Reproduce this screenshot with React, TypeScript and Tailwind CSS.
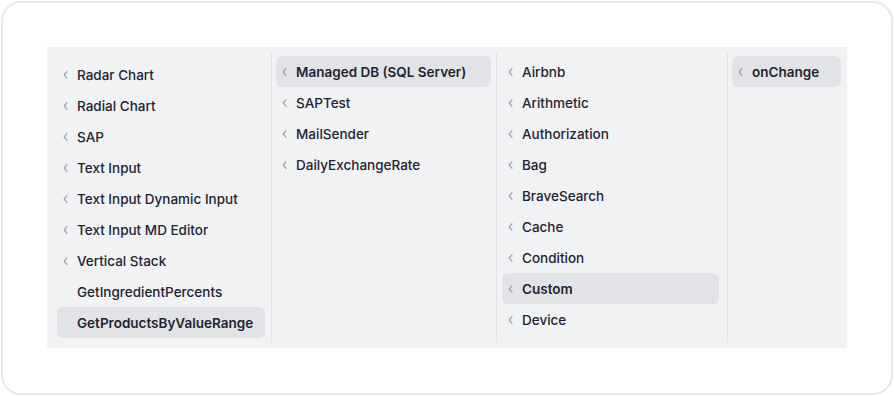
import React from "react";

type Item = { label: string; chevron?: boolean; active?: boolean };

const Chevron = () => (
  <svg width="10" height="10" viewBox="0 0 10 10" className="shrink-0" fill="none">
    <path d="M4 1.6 L1.2 5 L4 8.4" stroke="#9ca3af" strokeWidth="1.2" strokeLinecap="round" strokeLinejoin="round" />
  </svg>
);

const Row = ({ item }: { item: Item }) => (
  <div
    className={
      "flex h-[31px] items-center rounded-md pl-[6px] " +
      (item.active ? "bg-[#e2e3e7] font-semibold" : "font-medium")
    }
  >
    {item.chevron === false ? <div className="w-[10px] shrink-0" /> : <Chevron />}
    <span className="ml-[4px] whitespace-nowrap pt-[2px]">{item.label}</span>
  </div>
);

const col1: Item[] = [
  { label: "Radar Chart" },
  { label: "Radial Chart" },
  { label: "SAP" },
  { label: "Text Input" },
  { label: "Text Input Dynamic Input" },
  { label: "Text Input MD Editor" },
  { label: "Vertical Stack" },
  { label: "GetIngredientPercents", chevron: false },
  { label: "GetProductsByValueRange", chevron: false, active: true },
];

const col2: Item[] = [
  { label: "Managed DB (SQL Server)", active: true },
  { label: "SAPTest" },
  { label: "MailSender" },
  { label: "DailyExchangeRate" },
];

const col3: Item[] = [
  { label: "Airbnb" },
  { label: "Arithmetic" },
  { label: "Authorization" },
  { label: "Bag" },
  { label: "BraveSearch" },
  { label: "Cache" },
  { label: "Condition" },
  { label: "Custom", active: true },
  { label: "Device" },
];

const col4: Item[] = [{ label: "onChange", active: true }];

export default function App() {
  return (
    <div className="w-[894px] h-[396px] bg-white p-[1px]" style={{ fontFamily: "Inter, 'Noto Sans', sans-serif" }}>
      <div className="h-[394px] w-[892px] rounded-[20px] border-2 border-[#e6e8eb] px-[44px] pt-[44px]">
        <div className="flex h-[301px] w-[800px] bg-[#f1f2f4] py-[5px] text-[13.5px] leading-none text-[#1f2433]">
          <div className="w-[225px] shrink-0 border-r border-[#e1e3e7] pl-[10px] pr-[6px] pt-[7px]">
            {col1.map((i) => (
              <Row key={i.label} item={i} />
            ))}
          </div>
          <div className="w-[225px] shrink-0 border-r border-[#e1e3e7] pl-[4px] pr-[5px] pt-[4px]">
            {col2.map((i) => (
              <Row key={i.label} item={i} />
            ))}
          </div>
          <div className="w-[231px] shrink-0 border-r border-[#e1e3e7] pl-[5px] pr-[8px] pt-[4px]">
            {col3.map((i) => (
              <Row key={i.label} item={i} />
            ))}
          </div>
          <div className="w-[119px] shrink-0 pl-[4px] pr-[6px] pt-[4px]">
            {col4.map((i) => (
              <Row key={i.label} item={i} />
            ))}
          </div>
        </div>
      </div>
    </div>
  );
}
